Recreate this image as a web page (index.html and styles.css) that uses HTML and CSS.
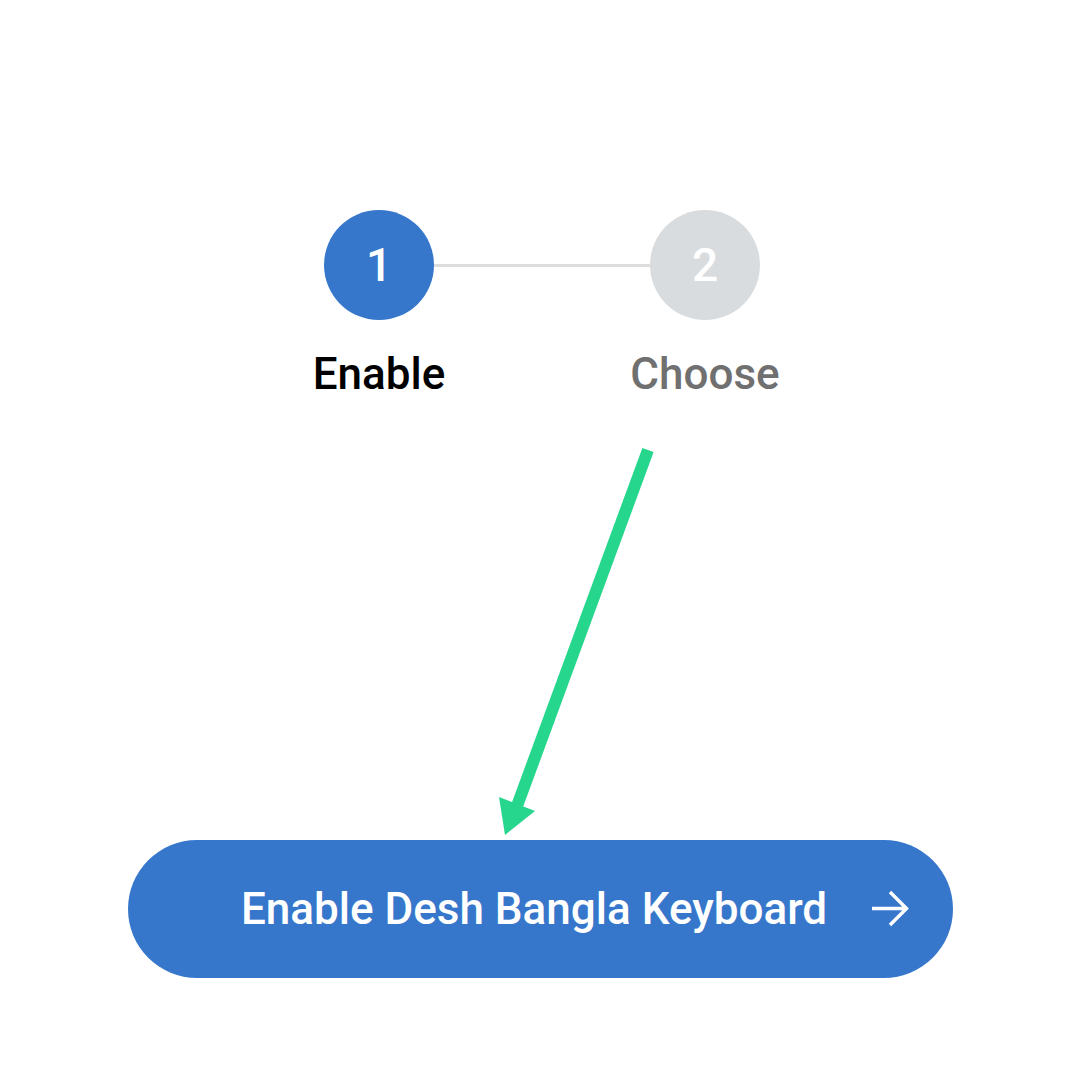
FILE: index.html
```html
<!DOCTYPE html>
<html lang="en">
<head>
<meta charset="utf-8">
<title>Enable Desh Bangla Keyboard</title>
<link rel="stylesheet" href="styles.css">
</head>
<body>
<main class="page">
  <section class="stepper">
    <div class="track">
      <div class="circle active">1</div>
      <div class="connector"></div>
      <div class="circle">2</div>
    </div>
    <div class="labels">
      <div class="label active">Enable</div>
      <div class="spacer"></div>
      <div class="label">Choose</div>
    </div>
  </section>
  <button class="cta" type="button">
    <span class="cta-text">Enable Desh Bangla Keyboard</span>
    <svg class="cta-icon" width="40" height="40" viewBox="0 0 40 40" aria-hidden="true">
      <path d="M1 19.5 H36 M19 3 L35.5 19.5 L19 36" fill="none" stroke="#fff" stroke-width="3.4" stroke-linecap="butt" stroke-linejoin="miter"/>
    </svg>
  </button>
  <svg class="pointer" width="1080" height="1080" viewBox="0 0 1080 1080" aria-hidden="true">
    <line x1="648" y1="450" x2="517" y2="806" stroke="#26d68d" stroke-width="12"/>
    <polygon points="499,797 535,811 505,835" fill="#26d68d"/>
  </svg>
</main>
</body>
</html>
```
FILE: styles.css
```css
* { box-sizing: border-box; }
html, body { margin: 0; padding: 0; background: #fff; }
body { font-family: Roboto, "Noto Sans", "Liberation Sans", sans-serif; }
.page {
  position: relative;
  width: 1080px;
  height: 1080px;
  display: flex;
  flex-direction: column;
  align-items: flex-start;
}
.stepper {
  margin-top: 210px;
  margin-left: 324px;
  display: flex;
  flex-direction: column;
  gap: 31px;
}
.track, .labels {
  display: flex;
  align-items: center;
}
.circle {
  width: 110px;
  height: 110px;
  border-radius: 50%;
  background: #d9dcdf;
  color: #fff;
  font-size: 46px;
  font-weight: 500;
  display: flex;
  align-items: center;
  justify-content: center;
  line-height: 1;
}
.circle.active { background: #3677cb; }
.connector {
  width: 216px;
  height: 3px;
  background: #dddddd;
}
.spacer { width: 216px; }
.label {
  width: 110px;
  display: flex;
  justify-content: center;
  white-space: nowrap;
  font-size: 44px;
  line-height: 46px;
  font-weight: 500;
  color: #707070;
}
.label.active { color: #000; }
.cta {
  margin-top: 443px;
  margin-left: 128px;
  width: 825px;
  height: 138px;
  border: 0;
  border-radius: 69px;
  background: #3677cb;
  color: #fff;
  display: flex;
  align-items: center;
  padding: 0 0 0 113px;
  font-family: Roboto, "Noto Sans", "Liberation Sans", sans-serif;
  font-size: 44px;
  font-weight: 500;
  gap: 44px;
}
.cta-text { white-space: nowrap; }
.cta-icon { flex: none; }
.pointer {
  position: absolute;
  left: 0;
  top: 0;
  pointer-events: none;
}
```
